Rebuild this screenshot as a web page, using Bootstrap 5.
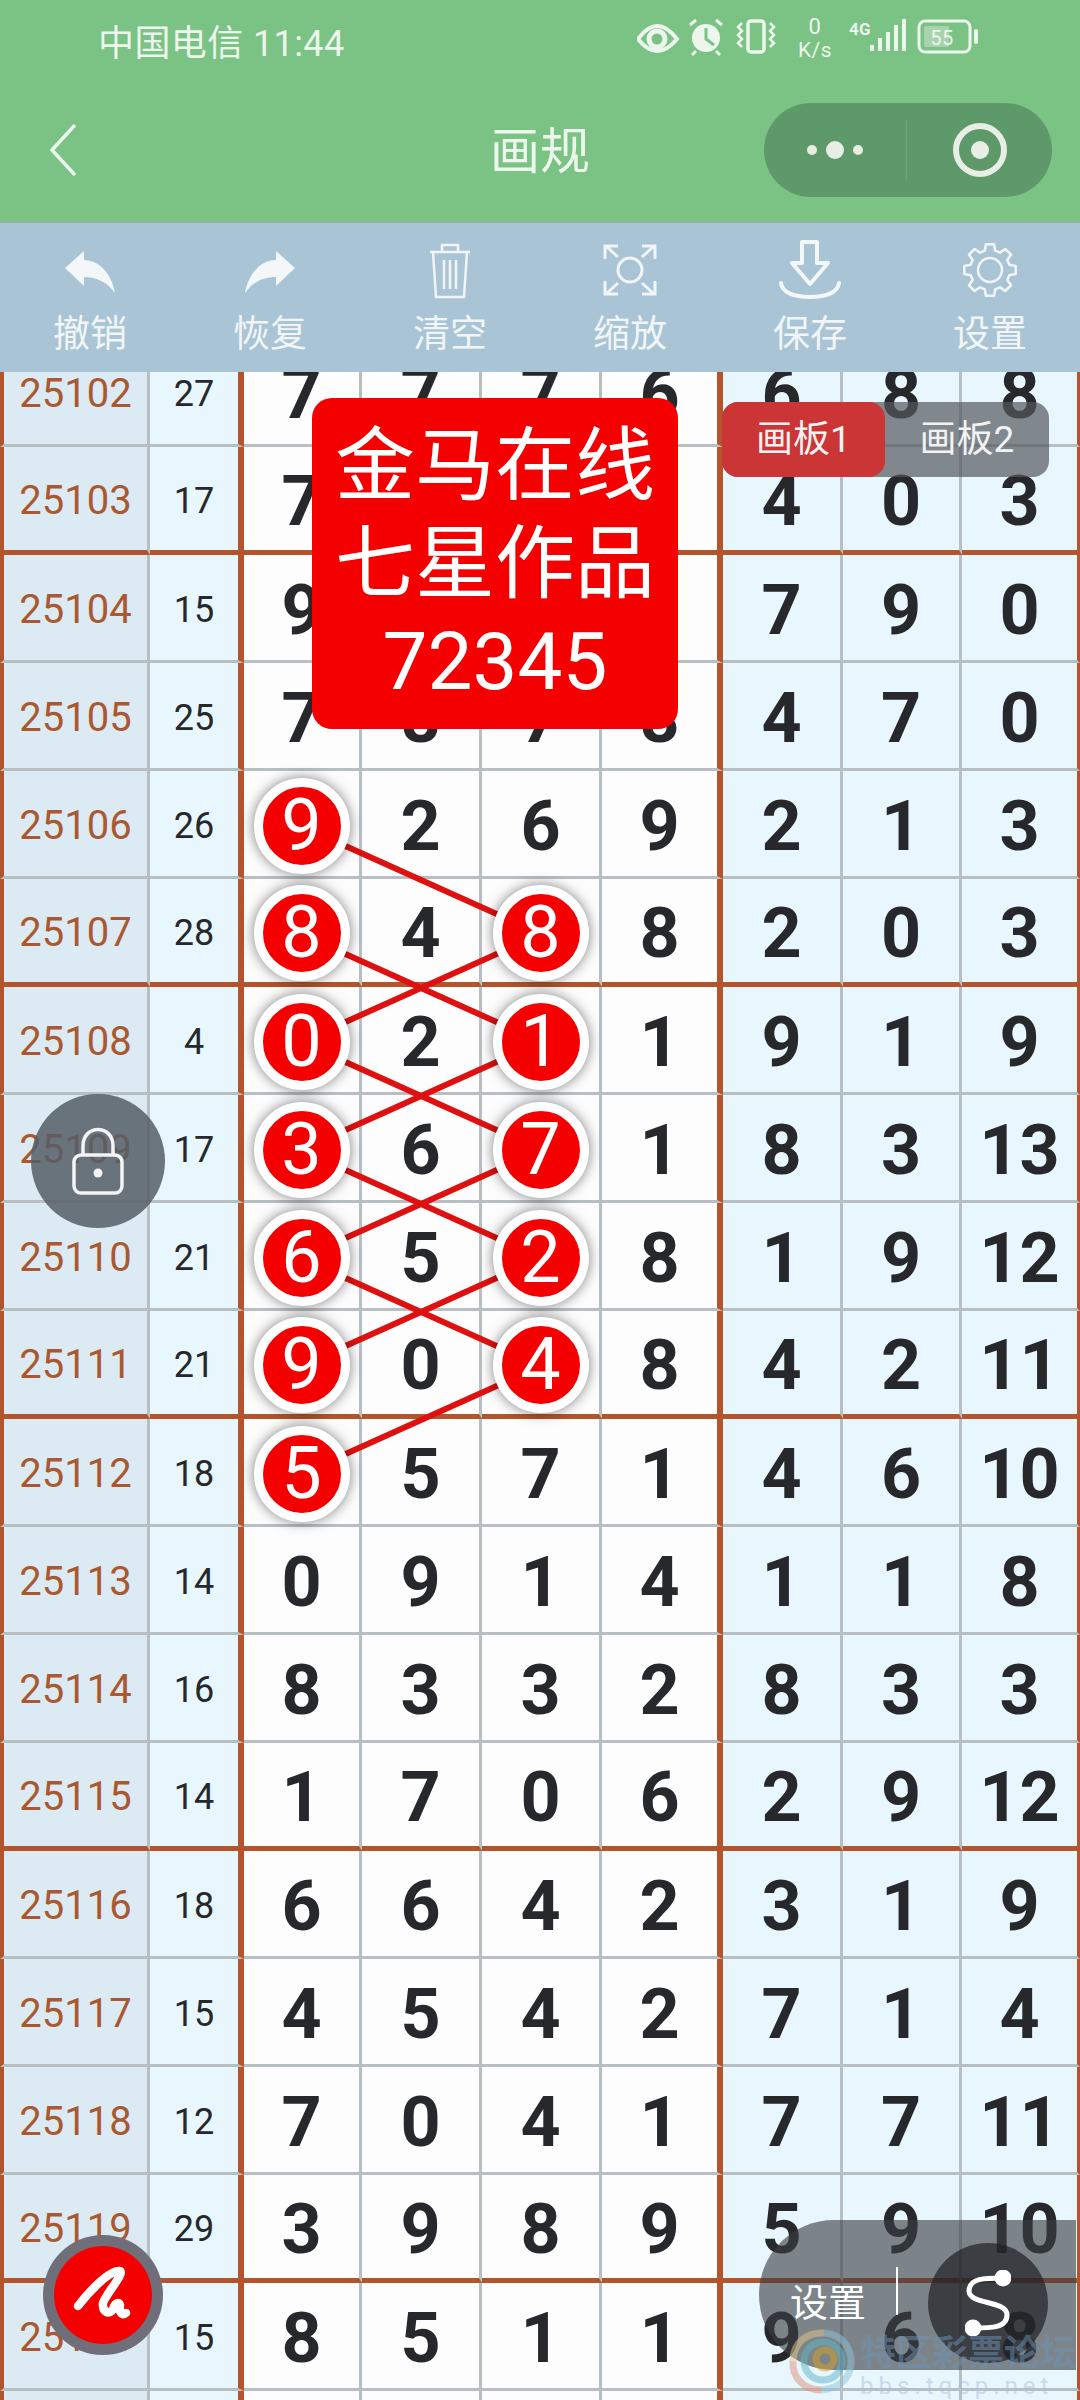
<!DOCTYPE html>
<html lang="zh-CN">
<head>
    <meta charset="UTF-8">
    <meta name="viewport" content="width=device-width, initial-scale=1.0">
    <title>画规</title>
    <link href="https://cdn.jsdelivr.net/npm/bootstrap@5.3.3/dist/css/bootstrap.min.css" rel="stylesheet">
    <style>
        body { background: #fff; font-family: Roboto, "Noto Sans CJK SC", sans-serif; }
        .screen { width: 1080px; height: 2400px; overflow: hidden; position: relative; }
        .app-head { background: #7bc285; height: 221px; color: #edf6ec; }
        .status-row { height: 84px; padding: 2px 98px 0 98px; font-size: 36px; line-height: 84px; letter-spacing: .4px; }
        .status-icons { margin-top: 5px; }
        .nav-row { height: 137px; position: relative; padding: 19px 28px 24px 50px; }
        .nav-title { position: absolute; left: 0; right: 0; top: 35px; text-align: center; font-size: 50px; line-height: 66px; }
        .capsule { width: 288px; height: 94px; background: #5e9a69; border-radius: 47px; }
        .capsule-sep { width: 1px; height: 60px; background: #6aa574; }
        .tool-bar { background: #a9c4d4; height: 151px; border-top: 2px solid #8cb596; color: #f1f5f7; }
        .tool-item { width: 180px; }
        .tool-icon { height: 62px; margin-top: 17px; }
        .tool-label { font-size: 37px; line-height: 46px; margin-top: 10px; }
        .grid-wrap { height: 2028px; overflow: hidden; }
        .draw-grid.table { width: 1080px; table-layout: fixed; border-collapse: separate; border-spacing: 0; margin: -33px 0 0; }
        .draw-grid.table > tbody > tr > td {
            height: 108px; padding: 4px 0 0; text-align: center; vertical-align: middle; line-height: 1;
            border: 0; border-right: 3px solid #b8bfc3; border-bottom: 3px solid #b8bfc3;
            background: #fdfdfd; color: #26282b; font-size: 70px; font-weight: 700; box-shadow: none;
        }
        .draw-grid.table > tbody > tr > td:nth-child(1) {
            background: #dceaf4; color: #aa5830; font-size: 40px; font-weight: 400; border-left: 4px solid #b5532c;
        }
        .draw-grid.table > tbody > tr > td:nth-child(2) { background: #e8f6fd; font-size: 36px; font-weight: 400; border-right: 6px solid #b5532c; }
        .draw-grid.table > tbody > tr > td:nth-child(6) { border-right: 6px solid #b5532c; }
        .draw-grid.table > tbody > tr > td:nth-child(n+7) { background: #e8f6fd; }
        .draw-grid.table > tbody > tr > td:nth-child(9) { border-right: 3px solid #b5532c; }
        .draw-grid.table > tbody > tr.group-end > td { border-bottom: 5px solid #b5532c; }
        .ball {
            position: relative; z-index: 2; width: 96px; height: 96px; margin: 0 auto;
            border: 9px solid #fff; border-radius: 50%; background: #f40000; color: #fff;
            font-weight: 400; font-size: 72px; line-height: 78px; box-shadow: 0 0 13px rgba(0, 0, 0, .5);
        }
        .link-lines { position: absolute; left: 0; top: 0; width: 1080px; height: 2400px; z-index: 1; pointer-events: none; }
        .promo-card {
            position: absolute; left: 312px; top: 398px; width: 366px; height: 331px; z-index: 3;
            background: #f40000; border-radius: 20px; color: #fff; font-size: 80px; line-height: 98px;
            text-align: center; padding-top: 19px;
        }
        .board-tabs { position: absolute; left: 722px; top: 402px; width: 327px; height: 75px; z-index: 3; color: #f2f2f2; font-size: 37px; border-radius: 16px; background: rgba(84, 88, 92, .7); }
        .board-tab { width: 163px; line-height: 75px; text-align: center; }
        .board-tab.on { background: #cc3535; border-radius: 16px; }
        .board-tab.off { width: 164px; }
        .lock-btn { position: absolute; left: 31px; top: 1094px; width: 134px; height: 134px; z-index: 3; background: rgba(85, 94, 102, .85); border-radius: 50%; }
        .pen-btn { position: absolute; left: 43px; top: 2235px; width: 120px; height: 120px; z-index: 3; background: #f40000; border: 11px solid rgba(104, 116, 126, .95); border-radius: 50%; }
        .set-pill { position: absolute; left: 759px; top: 2220px; width: 317px; height: 150px; z-index: 3; background: rgba(58, 62, 66, .62); border-radius: 75px 0 0 75px; color: #fff; font-size: 38px; padding-left: 31px; padding-top: 16px; }
        .pill-sep { width: 2px; height: 48px; background: #fff; margin: -24px 30px 0 30px; }
        .s-btn { width: 120px; height: 120px; background: rgba(28, 30, 32, .68); border-radius: 50%; }
        .water-mark { position: absolute; left: 788px; top: 2328px; z-index: 4; pointer-events: none; opacity: .5; }
        .water-text { color: #6d93b8; font-weight: 700; font-size: 36px; line-height: 40px; margin-top: 6px; white-space: nowrap; }
        .water-url { color: #a9c2d8; font-size: 24px; line-height: 24px; letter-spacing: 5px; white-space: nowrap; }
    </style>
</head>
<body>
<div class="screen">
    <!-- Status + title -->
    <div class="app-head">
        <div class="status-row d-flex justify-content-between">
            <div>中国电信 11:44</div>
            <svg class="status-icons" width="345" height="60" viewBox="640 10 345 60" fill="none" stroke="#edf6ec">
                <path d="M641 42 Q660 16 680 42 Q660 66 641 42Z" stroke-width="4"/>
                <circle cx="660" cy="42" r="8" stroke-width="5"/>
                <circle cx="709" cy="41" r="14" fill="#edf6ec" stroke="none"/>
                <path d="M709 31V42L717 48" stroke="#7bc285" stroke-width="3"/>
                <path d="M693 28l6-5M725 28l-6-5M699 54l-4 4M719 54l4 4" stroke-width="3"/>
                <rect x="751" y="24" width="16" height="31" rx="3" stroke-width="3.5"/>
                <path d="M745 26l-4 4 4 4-4 4 4 4-4 4 4 4M773 26l4 4-4 4 4 4-4 4 4 4-4 4" stroke-width="2.5"/>
                <text x="818" y="37" text-anchor="middle" fill="#edf6ec" stroke="none" font-size="22">0</text>
                <text x="818" y="60" text-anchor="middle" fill="#edf6ec" stroke="none" font-size="21">K/s</text>
                <text x="863" y="38" text-anchor="middle" fill="#edf6ec" stroke="none" font-size="17" font-weight="700">4G</text>
                <rect x="873" y="48" width="4" height="6" fill="#edf6ec" stroke="none"/>
                <rect x="881" y="41" width="4" height="13" fill="#edf6ec" stroke="none"/>
                <rect x="889" y="35" width="4" height="19" fill="#edf6ec" stroke="none"/>
                <rect x="897" y="28" width="4" height="26" fill="#edf6ec" stroke="none"/>
                <rect x="905" y="22" width="4" height="32" fill="#edf6ec" stroke="none"/>
                <rect x="922" y="24" width="51" height="31" rx="6" stroke-width="3"/>
                <rect x="927" y="29" width="25" height="21" rx="2" fill="#a9d3ae" stroke="none"/>
                <text x="945" y="48" text-anchor="middle" fill="#edf6ec" stroke="none" font-size="20">55</text>
                <rect x="977" y="32" width="4" height="15" rx="2" fill="#edf6ec" stroke="none"/>
            </svg>
        </div>
        <div class="nav-row d-flex justify-content-between align-items-center">
            <svg width="26" height="52" viewBox="0 0 26 52" fill="none" stroke="#edf6ec" stroke-width="3.5"><path d="M25 1 2 26 25 51"/></svg>
            <div class="nav-title">画规</div>
            <div class="capsule d-flex align-items-center">
                <div class="d-flex justify-content-center align-items-center" style="width:142px">
                    <svg width="56" height="20" viewBox="0 0 56 20" fill="#e8ede5"><circle cx="5" cy="10" r="5"/><circle cx="28" cy="10" r="9"/><circle cx="51" cy="10" r="5"/></svg>
                </div>
                <div class="capsule-sep"></div>
                <div class="flex-grow-1 d-flex justify-content-center align-items-center">
                    <svg width="56" height="56" viewBox="0 0 56 56" fill="none"><circle cx="28" cy="28" r="24" stroke="#e8ede5" stroke-width="6"/><circle cx="28" cy="28" r="9" fill="#e8ede5"/></svg>
                </div>
            </div>
        </div>
    </div>

    <!-- Tools -->
    <div class="tool-bar d-flex">
        <div class="tool-item text-center">
            <div class="tool-icon"><svg width="50" height="42" viewBox="0 0 50 42" fill="#f4f7f8" style="margin-top:11px"><path d="M0 17 19 0V9C35 9 47 24 50 42 42 31 32 26 19 26V35Z"/></svg></div>
            <div class="tool-label">撤销</div>
        </div>
        <div class="tool-item text-center">
            <div class="tool-icon"><svg width="50" height="42" viewBox="0 0 50 42" fill="#f4f7f8" style="margin-top:11px"><path d="M50 17 31 0V9C15 9 3 24 0 42 8 31 18 26 31 26V35Z"/></svg></div>
            <div class="tool-label">恢复</div>
        </div>
        <div class="tool-item text-center">
            <div class="tool-icon"><svg width="42" height="56" viewBox="0 0 42 56" fill="none" stroke="#f1f5f7" stroke-width="2.5" style="margin-top:3px"><path d="M1 9H41M13 9V2H29V9M4 9 7 54H35L38 9M15 17V46M21 17V46M27 17V46"/></svg></div>
            <div class="tool-label">清空</div>
        </div>
        <div class="tool-item text-center">
            <div class="tool-icon"><svg width="54" height="54" viewBox="0 0 54 54" fill="none" stroke="#f1f5f7" stroke-width="3" style="margin-top:3px"><circle cx="27" cy="27" r="12"/><path d="M2 16V3H15M3 3 15 14M39 3H52V16M51 3 39 14M2 38V51H15M3 51 15 40M39 51H52V38M51 51 39 40"/></svg></div>
            <div class="tool-label">缩放</div>
        </div>
        <div class="tool-item text-center">
            <div class="tool-icon"><svg width="62" height="60" viewBox="0 0 62 60" fill="none" stroke="#f4f7f8" stroke-width="4" stroke-linejoin="round" stroke-linecap="round"><path d="M23 2H38V23H49L31 44 13 23H23Z"/><path d="M2 43C3 52 14 57 31 57 48 57 59 52 60 43"/></svg></div>
            <div class="tool-label">保存</div>
        </div>
        <div class="tool-item text-center">
            <div class="tool-icon"><svg width="56" height="56" viewBox="-28 -28 56 56" fill="none" stroke="#f1f5f7" stroke-width="2.5" stroke-linejoin="round" style="margin-top:2px"><circle r="12"/><path d="M-4.1 25.7 4.1 25.7 5.2 19.3 10 17.3 15.3 21 21 15.3 17.3 10 19.3 5.2 25.7 4.1 25.7-4.1 19.3-5.2 17.3-10 21-15.3 15.3-21 10-17.3 5.2-19.3 4.1-25.7-4.1-25.7-5.2-19.3-10-17.3-15.3-21-21-15.3-17.3-10-19.3-5.2-25.7-4.1-25.7 4.1-19.3 5.2-17.3 10-21 15.3-15.3 21-10 17.3-5.2 19.3Z"/></svg></div>
            <div class="tool-label">设置</div>
        </div>
    </div>

    <!-- Draw table -->
    <div class="grid-wrap">
        <table class="table draw-grid">
            <colgroup><col style="width:150px"><col style="width:94px"><col style="width:118px"><col style="width:120px"><col style="width:120px"><col style="width:121px"><col style="width:120px"><col style="width:119px"><col style="width:118px"></colgroup>
            <tbody>
                <tr><td>25102</td><td>27</td><td>7</td><td>7</td><td>7</td><td>6</td><td>6</td><td>8</td><td>8</td></tr>
                <tr class="group-end"><td>25103</td><td>17</td><td>7</td><td>0</td><td>7</td><td>3</td><td>4</td><td>0</td><td>3</td></tr>
                <tr><td>25104</td><td>15</td><td>9</td><td>1</td><td>5</td><td>2</td><td>7</td><td>9</td><td>0</td></tr>
                <tr><td>25105</td><td>25</td><td>7</td><td>8</td><td>7</td><td>8</td><td>4</td><td>7</td><td>0</td></tr>
                <tr><td>25106</td><td>26</td><td><div class="ball">9</div></td><td>2</td><td>6</td><td>9</td><td>2</td><td>1</td><td>3</td></tr>
                <tr class="group-end"><td>25107</td><td>28</td><td><div class="ball">8</div></td><td>4</td><td><div class="ball">8</div></td><td>8</td><td>2</td><td>0</td><td>3</td></tr>
                <tr><td>25108</td><td>4</td><td><div class="ball">0</div></td><td>2</td><td><div class="ball">1</div></td><td>1</td><td>9</td><td>1</td><td>9</td></tr>
                <tr><td>25109</td><td>17</td><td><div class="ball">3</div></td><td>6</td><td><div class="ball">7</div></td><td>1</td><td>8</td><td>3</td><td>13</td></tr>
                <tr><td>25110</td><td>21</td><td><div class="ball">6</div></td><td>5</td><td><div class="ball">2</div></td><td>8</td><td>1</td><td>9</td><td>12</td></tr>
                <tr class="group-end"><td>25111</td><td>21</td><td><div class="ball">9</div></td><td>0</td><td><div class="ball">4</div></td><td>8</td><td>4</td><td>2</td><td>11</td></tr>
                <tr><td>25112</td><td>18</td><td><div class="ball">5</div></td><td>5</td><td>7</td><td>1</td><td>4</td><td>6</td><td>10</td></tr>
                <tr><td>25113</td><td>14</td><td>0</td><td>9</td><td>1</td><td>4</td><td>1</td><td>1</td><td>8</td></tr>
                <tr><td>25114</td><td>16</td><td>8</td><td>3</td><td>3</td><td>2</td><td>8</td><td>3</td><td>3</td></tr>
                <tr class="group-end"><td>25115</td><td>14</td><td>1</td><td>7</td><td>0</td><td>6</td><td>2</td><td>9</td><td>12</td></tr>
                <tr><td>25116</td><td>18</td><td>6</td><td>6</td><td>4</td><td>2</td><td>3</td><td>1</td><td>9</td></tr>
                <tr><td>25117</td><td>15</td><td>4</td><td>5</td><td>4</td><td>2</td><td>7</td><td>1</td><td>4</td></tr>
                <tr><td>25118</td><td>12</td><td>7</td><td>0</td><td>4</td><td>1</td><td>7</td><td>7</td><td>11</td></tr>
                <tr class="group-end"><td>25119</td><td>29</td><td>3</td><td>9</td><td>8</td><td>9</td><td>5</td><td>9</td><td>10</td></tr>
                <tr><td>25120</td><td>15</td><td>8</td><td>5</td><td>1</td><td>1</td><td>9</td><td>6</td><td>8</td></tr>
                <tr><td>25121</td><td>20</td><td>2</td><td>4</td><td>6</td><td>3</td><td>1</td><td>5</td><td>7</td></tr>
            </tbody>
        </table>
    </div>

    <!-- Lines between the balls -->
    <svg class="link-lines" viewBox="0 0 1080 2400" stroke="#de1010" stroke-width="6">
        <path d="M301 826 541 934M541 934 301 1042M301 934 541 1042M541 1042 301 1150M301 1042 541 1150M541 1150 301 1258M301 1150 541 1258M541 1258 301 1366M301 1258 541 1366M541 1366 301 1474"/>
    </svg>

    <!-- Floating bits -->
    <div class="promo-card">金马在线<br>七星作品<br>72345</div>

    <div class="board-tabs d-flex">
        <div class="board-tab on">画板1</div>
        <div class="board-tab off">画板2</div>
    </div>

    <div class="lock-btn d-flex justify-content-center align-items-center">
        <svg width="52" height="68" viewBox="0 0 52 68" fill="none" stroke="#f3f4f5" stroke-width="3.5"><path d="M11 28V19C11 -3 41 -3 41 19V28"/><rect x="2" y="28" width="48" height="38" rx="7"/><circle cx="26" cy="46" r="4.5" fill="#f3f4f5" stroke="none"/></svg>
    </div>

    <div class="pen-btn d-flex justify-content-center align-items-center">
        <svg width="60" height="60" viewBox="0 0 60 60" fill="none" stroke="#fff" stroke-width="8.5" stroke-linecap="round" stroke-linejoin="round"><path d="M5 41C15 28 35 6 46 6 54 6 32 30 30 38 29 48 37 50 40 44 42 38 46 36 47 40 46 46 48 52 53 48"/></svg>
    </div>

    <div class="set-pill d-flex align-items-center">
        <div>设置</div>
        <div class="pill-sep"></div>
        <div class="s-btn d-flex justify-content-center align-items-center">
            <svg width="46" height="66" viewBox="0 0 46 66" fill="none" stroke="#fff" stroke-width="5"><path d="M38 8C20 8 4 8 4 21 4 35 42 30 42 45 42 58 26 58 8 58"/><circle cx="38" cy="8" r="6" fill="#fff"/><circle cx="8" cy="58" r="6" fill="#fff"/></svg>
        </div>
    </div>

    <div class="water-mark d-flex">
        <svg width="68" height="68" viewBox="0 0 68 68" fill="none" stroke-width="7">
            <path d="M34 62C14 62 4 48 5 33" stroke="#e0907a"/>
            <path d="M5 33C5 14 20 4 36 5" stroke="#e8c98a"/>
            <path d="M36 5C54 6 64 20 63 36 62 50 52 60 34 62" stroke="#8ec6dc"/>
            <circle cx="35" cy="33" r="19" stroke="#5fb6c6"/>
            <circle cx="37" cy="31" r="9" stroke="#d8a020"/>
        </svg>
        <div class="ms-1">
            <div class="water-text">特区彩票论坛</div>
            <div class="water-url">bbs.tqcp.net</div>
        </div>
    </div>
</div>
<script src="https://cdn.jsdelivr.net/npm/bootstrap@5.3.3/dist/js/bootstrap.bundle.min.js"></script>
</body>
</html>
